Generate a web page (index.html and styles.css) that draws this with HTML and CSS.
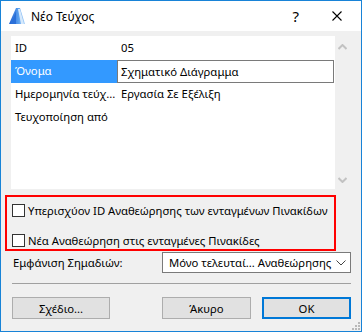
FILE: index.html
```html
<!DOCTYPE html>
<html lang="el">
<head>
  <meta charset="UTF-8">
  <title>Νέο Τεύχος</title>
  <link rel="stylesheet" href="styles.css">
</head>
<body>

  <div class="window">
    <div class="titlebar">
      <svg class="app-icon" width="16" height="16" viewBox="0 0 16 16">
        <defs>
          <linearGradient id="g" x1="0" y1="0" x2="1" y2="0">
            <stop offset="0" stop-color="#1d5fd0"/>
            <stop offset="0.6" stop-color="#5aa0ee"/>
            <stop offset="1" stop-color="#a9d0f8"/>
          </linearGradient>
        </defs>
        <polygon points="0,16 7,0 11,0 16,16" fill="url(#g)"/>
        <polygon points="2,16 7,3 7,16" fill="#2a6fd8"/>
        <polygon points="9,1 11,1 15,16 12,16" fill="#d6e9fc"/>
      </svg>
      <span class="title">Νέο Τεύχος</span>
      <span class="help">?</span>
      <svg class="close" width="10" height="10" viewBox="0 0 10 10">
        <path d="M0.5 0.5 L9.5 9.5 M9.5 0.5 L0.5 9.5" stroke="#000" stroke-width="1.1" fill="none"/>
      </svg>
    </div>

    <div class="content">
      <div class="list-wrap">
        <div class="list">
          <div class="row">
            <div class="cell-label">ID</div>
            <div class="cell-value">05</div>
          </div>
          <div class="row">
            <div class="cell-label selected">Όνομα</div>
            <div class="cell-value editing">Σχηματικό Διάγραμμα</div>
          </div>
          <div class="row">
            <div class="cell-label">Ημερομηνία τεύχ...</div>
            <div class="cell-value">Εργασία Σε Εξέλιξη</div>
          </div>
          <div class="row">
            <div class="cell-label">Τευχοποίηση από</div>
            <div class="cell-value"></div>
          </div>
        </div>
        <div class="scrollbar">
          <svg width="9" height="6" viewBox="0 0 9 6"><path d="M0.5 5 L4.5 1 L8.5 5" stroke="#c2c2c2" stroke-width="2" fill="none"/></svg>
          <svg width="9" height="6" viewBox="0 0 9 6"><path d="M0.5 1 L4.5 5 L8.5 1" stroke="#c2c2c2" stroke-width="2" fill="none"/></svg>
        </div>
      </div>

      <div class="marked">
        <label class="check-row"><span class="checkbox"></span>Υπερισχύον ID Αναθεώρησης των ενταγμένων Πινακίδων</label>
        <label class="check-row"><span class="checkbox"></span>Νέα Αναθεώρηση στις ενταγμένες Πινακίδες</label>
      </div>

      <div class="markers">
        <span>Εμφάνιση Σημαδιών:</span>
        <div class="select">
          <span>Μόνο τελευταί... Αναθεώρησης</span>
          <svg width="10" height="6" viewBox="0 0 10 6"><path d="M0.5 0.5 L5 5 L9.5 0.5" stroke="#444" stroke-width="1" fill="none"/></svg>
        </div>
      </div>

      <div class="separator"></div>

      <div class="buttons">
        <button class="btn btn-layout">Σχέδιο...</button>
        <div class="spacer"></div>
        <button class="btn">Άκυρο</button>
        <button class="btn btn-default">OK</button>
      </div>

      <svg class="grip" width="8" height="8" viewBox="0 0 8 8">
        <rect x="6" y="0" width="2" height="2" fill="#b8b8b8"/>
        <rect x="3" y="3" width="2" height="2" fill="#b8b8b8"/>
        <rect x="6" y="3" width="2" height="2" fill="#b8b8b8"/>
        <rect x="0" y="6" width="2" height="2" fill="#b8b8b8"/>
        <rect x="3" y="6" width="2" height="2" fill="#b8b8b8"/>
        <rect x="6" y="6" width="2" height="2" fill="#b8b8b8"/>
      </svg>
    </div>
  </div>

</body>
</html>
```

FILE: styles.css
```css
body {
  margin: 0;
  font-family: "Noto Sans", "Open Sans", sans-serif;
  font-size: 11.3px;
  color: #000;
}

.window {
  width: 362px;
  height: 332px;
  box-sizing: border-box;
  border: 1px solid #1883d7;
  display: flex;
  flex-direction: column;
}

.titlebar {
  height: 30px;
  background: #fff;
  display: flex;
  align-items: center;
  padding-left: 8px;
  font-size: 12px;
}

.app-icon {
  margin-right: 6px;
}

.title {
  flex: 1;
}

.help {
  font-size: 15px;
  margin-right: 33px;
}

.close {
  margin-right: 19px;
}

.content {
  flex: 1;
  background: #f0f0f0;
  padding: 5px 10px 0 10px;
  position: relative;
}

.list-wrap {
  display: flex;
  height: 153px;
}

.list {
  width: 324px;
  background: #fff;
  padding-top: 1px;
  box-sizing: border-box;
}

.row {
  display: grid;
  grid-template-columns: 106px 1fr;
  height: 23px;
}

.cell-label {
  padding-left: 4px;
  line-height: 22px;
  white-space: nowrap;
  overflow: hidden;
}

.cell-label.selected {
  background: #3399ff;
  color: #fff;
}

.cell-value {
  padding-left: 4px;
  line-height: 22px;
  white-space: nowrap;
}

.cell-value.editing {
  border: 1px solid #7a7a7a;
  padding-left: 3px;
  line-height: 21px;
  margin-right: 1px;
}

.scrollbar {
  width: 15px;
  display: flex;
  flex-direction: column;
  justify-content: space-between;
  align-items: center;
  padding: 8px 0 6px 0;
  box-sizing: border-box;
}

.marked {
  margin: 6px 15px 0 -6px;
  border: 2px solid #ff0000;
  height: 56px;
  box-sizing: border-box;
  padding-left: 5px;
  padding-top: 6px;
}

.check-row {
  display: flex;
  align-items: center;
  height: 15px;
  margin-bottom: 15px;
  white-space: nowrap;
}

.checkbox {
  flex-shrink: 0;
  width: 13px;
  height: 13px;
  box-sizing: border-box;
  border: 1px solid #333;
  background: #fff;
  margin-right: 3px;
}

.markers {
  display: flex;
  align-items: center;
  justify-content: space-between;
  margin-top: 1px;
  padding-left: 2px;
}

.select {
  width: 189px;
  height: 21px;
  box-sizing: border-box;
  border: 1px solid #7a7a7a;
  background: #fff;
  display: flex;
  align-items: center;
  justify-content: space-between;
  padding: 0 4px 0 6px;
  white-space: nowrap;
}

.separator {
  height: 1px;
  background: #a0a0a0;
  margin-top: 10px;
  margin-left: 1px;
}

.buttons {
  display: flex;
  margin-top: 13px;
  padding-left: 1px;
}

.spacer {
  flex: 1;
}

.btn {
  width: 89px;
  height: 22px;
  background: #e1e1e1;
  border: 1px solid #adadad;
  font-family: inherit;
  font-size: 11.3px;
  color: #000;
  padding: 0;
}

.btn-layout {
  width: 98px;
}

.btn + .btn {
  margin-left: 11px;
}

.btn-default {
  border: 2px solid #0078d7;
}

.grip {
  position: absolute;
  right: 1px;
  bottom: 1px;
}
```
